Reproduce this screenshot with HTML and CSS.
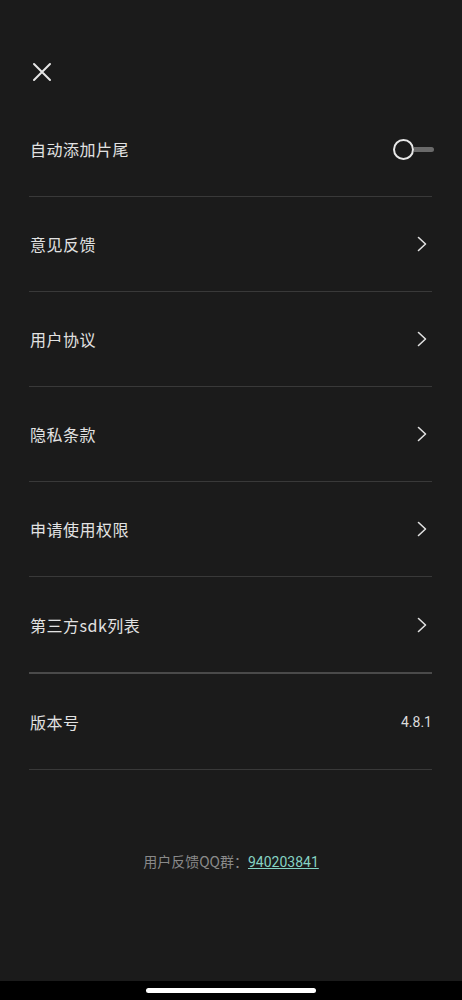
FILE: index.html
```html
<!DOCTYPE html>
<html lang="zh">
<head>
<meta charset="utf-8">
<link rel="stylesheet" href="styles.css">
</head>
<body>
<div class="page">
  <div class="content">
    <header class="header">
      <svg class="close" width="20" height="20" viewBox="0 0 20 20"><path d="M2 2L18 18M18 2L2 18" stroke="#e6e6e6" stroke-width="2" stroke-linecap="round" fill="none"/></svg>
    </header>
    <ul class="list">
      <li class="row">
        <span class="label">自动添加片尾</span>
        <span class="toggle"><span class="knob"></span><span class="track"></span></span>
      </li>
      <li class="row"><span class="label">意见反馈</span><svg class="chev" width="10" height="16" viewBox="0 0 10 16"><path d="M1.5 1.5L8.5 8L1.5 14.5" stroke="#e0e0e0" stroke-width="1.6" fill="none" stroke-linecap="round" stroke-linejoin="round"/></svg></li>
      <li class="row"><span class="label">用户协议</span><svg class="chev" width="10" height="16" viewBox="0 0 10 16"><path d="M1.5 1.5L8.5 8L1.5 14.5" stroke="#e0e0e0" stroke-width="1.6" fill="none" stroke-linecap="round" stroke-linejoin="round"/></svg></li>
      <li class="row"><span class="label">隐私条款</span><svg class="chev" width="10" height="16" viewBox="0 0 10 16"><path d="M1.5 1.5L8.5 8L1.5 14.5" stroke="#e0e0e0" stroke-width="1.6" fill="none" stroke-linecap="round" stroke-linejoin="round"/></svg></li>
      <li class="row"><span class="label">申请使用权限</span><svg class="chev" width="10" height="16" viewBox="0 0 10 16"><path d="M1.5 1.5L8.5 8L1.5 14.5" stroke="#e0e0e0" stroke-width="1.6" fill="none" stroke-linecap="round" stroke-linejoin="round"/></svg></li>
      <li class="row row-thick"><span class="label">第三方sdk列表</span><svg class="chev" width="10" height="16" viewBox="0 0 10 16"><path d="M1.5 1.5L8.5 8L1.5 14.5" stroke="#e0e0e0" stroke-width="1.6" fill="none" stroke-linecap="round" stroke-linejoin="round"/></svg></li>
      <li class="row row-version"><span class="label">版本号</span><span class="version">4.8.1</span></li>
    </ul>
    <p class="footer">用户反馈QQ群：<a class="qq" href="#">940203841</a></p>
  </div>
  <div class="navbar"><span class="pill"></span></div>
</div>
</body>
</html>
```
FILE: styles.css
```css
* { box-sizing: border-box; }
html, body { margin: 0; padding: 0; background: #1b1b1b; }
body {
  font-family: "Noto Sans CJK SC", "Noto Sans", sans-serif;
  color: #e2e2e2;
}
.page {
  min-height: 100vh;
  display: flex;
  flex-direction: column;
}
.content { flex: 1; }
.header {
  height: 102px;
  padding: 62px 0 0 32px;
}
.close { display: block; }
.list {
  list-style: none;
  margin: 0;
  padding: 0 30px 0 29px;
}
.row {
  height: 95px;
  display: flex;
  align-items: center;
  justify-content: space-between;
  border-bottom: 1px solid #393939;
}
.row-thick {
  height: 97px;
  border-bottom: 2px solid #4a4a4a;
}
.row-version {
  height: 96px;
}
.label {
  font-size: 16px;
  letter-spacing: 0.5px;
  padding-left: 1px;
  line-height: 20px;
}
.chev { margin-right: 5px; }
.toggle {
  display: flex;
  align-items: center;
  margin-right: -2px;
}
.knob {
  width: 21px;
  height: 21px;
  border: 2px solid #e8e8e8;
  border-radius: 50%;
}
.track {
  width: 20px;
  height: 5px;
  background: #6a6a6a;
  border-radius: 0 3px 3px 0;
}
.version {
  font-family: "Roboto", "Noto Sans", sans-serif;
  font-size: 14px;
  color: #dcdcdc;
}
.footer {
  margin: 82px 0 0;
  text-align: center;
  font-size: 14px;
  line-height: 18px;
  color: #8a8a8a;
}
.qq {
  color: #86d3c3;
  text-decoration: underline;
  font-family: "Roboto", "Noto Sans", sans-serif;
}
.navbar {
  height: 19px;
  background: #000;
  display: flex;
  justify-content: center;
  align-items: flex-start;
  padding-top: 7px;
}
.pill {
  width: 170px;
  height: 5px;
  border-radius: 3px;
  background: #fff;
}
```
